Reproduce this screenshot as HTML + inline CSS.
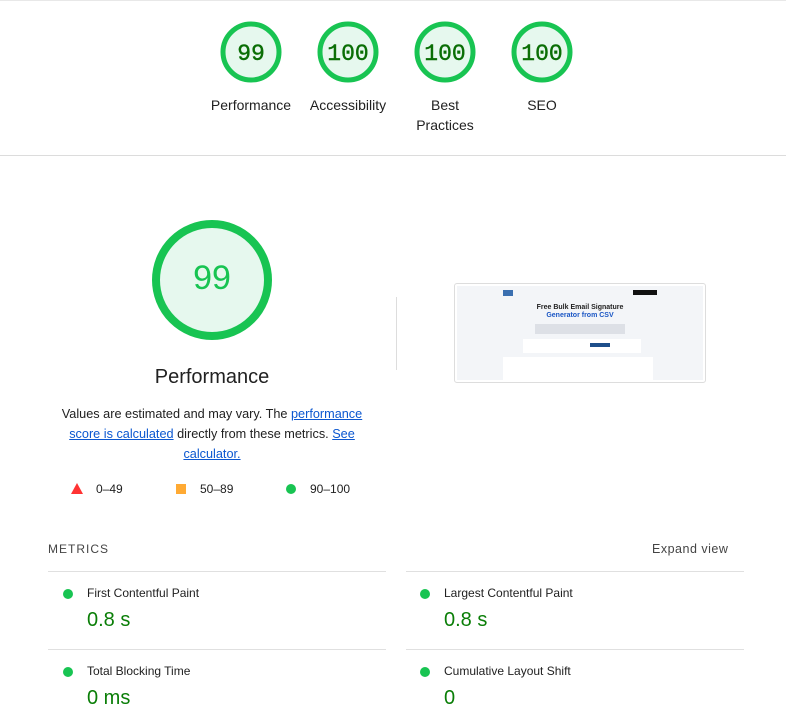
<!DOCTYPE html>
<html><head><meta charset="utf-8"><style>
*{margin:0;padding:0;box-sizing:border-box}
body{width:786px;height:712px;overflow:hidden;background:#fff;font-family:"Liberation Sans",Arial,sans-serif;color:#212121;position:relative}
.a{position:absolute}
.g{position:absolute;text-align:center;width:96px}
.g svg{display:block;margin:0 auto}
.lbl{font-size:14px;line-height:20px;margin-top:11px;color:#212121}
a{color:#0b57d0;text-decoration:underline}
.m{position:absolute;font-size:12px;color:#212121}
.dot{position:absolute;width:10px;height:10px;border-radius:50%;background:#18c452}
.val{position:absolute;font-size:20px;color:#0a7e07}
.hl{position:absolute;height:1px;background:#e0e0e0}
</style></head><body>
<div class="hl" style="left:0;top:0;width:786px;background:#e8e8e8"></div>
<div class="g" style="left:203px;top:20px">
<svg width="64" height="64"><circle cx="32" cy="32" r="28" fill="#e6f8ee" stroke="#18c452" stroke-width="5"/><text x="32" y="40" text-anchor="middle" font-family="Liberation Mono,monospace" font-size="23" fill="#0a6e05" stroke="#0a6e05" stroke-width="0.4">99</text></svg>
<div class="lbl">Performance</div></div>
<div class="g" style="left:300px;top:20px">
<svg width="64" height="64"><circle cx="32" cy="32" r="28" fill="#e6f8ee" stroke="#18c452" stroke-width="5"/><text x="32" y="40" text-anchor="middle" font-family="Liberation Mono,monospace" font-size="23" fill="#0a6e05" stroke="#0a6e05" stroke-width="0.4">100</text></svg>
<div class="lbl">Accessibility</div></div>
<div class="g" style="left:397px;top:20px">
<svg width="64" height="64"><circle cx="32" cy="32" r="28" fill="#e6f8ee" stroke="#18c452" stroke-width="5"/><text x="32" y="40" text-anchor="middle" font-family="Liberation Mono,monospace" font-size="23" fill="#0a6e05" stroke="#0a6e05" stroke-width="0.4">100</text></svg>
<div class="lbl">Best<br>Practices</div></div>
<div class="g" style="left:494px;top:20px">
<svg width="64" height="64"><circle cx="32" cy="32" r="28" fill="#e6f8ee" stroke="#18c452" stroke-width="5"/><text x="32" y="40" text-anchor="middle" font-family="Liberation Mono,monospace" font-size="23" fill="#0a6e05" stroke="#0a6e05" stroke-width="0.4">100</text></svg>
<div class="lbl">SEO</div></div>
<div class="hl" style="left:0;top:155px;width:786px;background:#dcdcdc"></div>

<svg class="a" style="left:150px;top:218px" width="124" height="124"><circle cx="62" cy="62" r="56" fill="#e6f8ee" stroke="#18c452" stroke-width="8"/><text x="62" y="71" text-anchor="middle" font-family="Liberation Sans,sans-serif" font-size="34" fill="#18c452">99</text></svg>
<div class="a" style="left:112px;top:366px;width:200px;text-align:center;font-size:20px">Performance</div>
<div class="a" style="left:50px;top:404px;width:324px;text-align:center;font-size:12.7px;line-height:20px">Values are estimated and may vary. The <a>performance score is calculated</a> directly from these metrics. <a>See calculator.</a></div>
<svg class="a" style="left:71px;top:483px" width="12" height="11"><polygon points="6,0 12,11 0,11" fill="#f33"/></svg>
<div class="m" style="left:96px;top:482px">0–49</div>
<div class="a" style="left:176px;top:484px;width:10px;height:10px;background:#fa3"></div>
<div class="m" style="left:200px;top:482px">50–89</div>
<div class="dot" style="left:286px;top:484px"></div>
<div class="m" style="left:310px;top:482px">90–100</div>

<div class="a" style="left:396px;top:297px;width:1px;height:73px;background:#ddd"></div>
<div class="a" style="left:454px;top:283px;width:252px;height:100px;border:1px solid #ddd;border-radius:3px;background:#fff;overflow:hidden">
<div class="a" style="left:2px;top:2px;width:246px;height:94px;background:#f3f5f8"></div>
<div class="a" style="left:48px;top:6px;width:10px;height:6px;background:#3a6fb0"></div>
<div class="a" style="left:178px;top:6px;width:24px;height:5px;background:#111"></div>
<div class="a" style="left:60px;top:20px;width:130px;text-align:center;font-size:7px;font-weight:bold;line-height:8px;color:#222">Free Bulk Email Signature<br><span style="color:#1a56c4">Generator from CSV</span></div>
<div class="a" style="left:80px;top:40px;width:90px;height:10px;background:#dde0e6"></div>
<div class="a" style="left:68px;top:55px;width:118px;height:14px;background:#fff"></div>
<div class="a" style="left:135px;top:59px;width:20px;height:4px;background:#1d4e8a"></div>
<div class="a" style="left:48px;top:73px;width:150px;height:30px;background:#fff"></div>
</div>

<div class="a" style="left:48px;top:542px;font-size:12px;letter-spacing:1px;color:#444">METRICS</div>
<div class="a" style="left:652px;top:542px;font-size:12.5px;letter-spacing:.5px;color:#444">Expand view</div>
<div class="hl" style="left:48px;top:571px;width:338px"></div>
<div class="hl" style="left:406px;top:571px;width:338px"></div>
<div class="hl" style="left:48px;top:649px;width:338px"></div>
<div class="hl" style="left:406px;top:649px;width:338px"></div>
<div class="dot" style="left:63px;top:589px"></div><div class="m" style="left:87px;top:586px">First Contentful Paint</div><div class="val" style="left:87px;top:609px">0.8 s</div>
<div class="dot" style="left:420px;top:589px"></div><div class="m" style="left:444px;top:586px">Largest Contentful Paint</div><div class="val" style="left:444px;top:609px">0.8 s</div>
<div class="dot" style="left:63px;top:667px"></div><div class="m" style="left:87px;top:664px">Total Blocking Time</div><div class="val" style="left:87px;top:687px">0 ms</div>
<div class="dot" style="left:420px;top:667px"></div><div class="m" style="left:444px;top:664px">Cumulative Layout Shift</div><div class="val" style="left:444px;top:687px">0</div>
</body></html>
